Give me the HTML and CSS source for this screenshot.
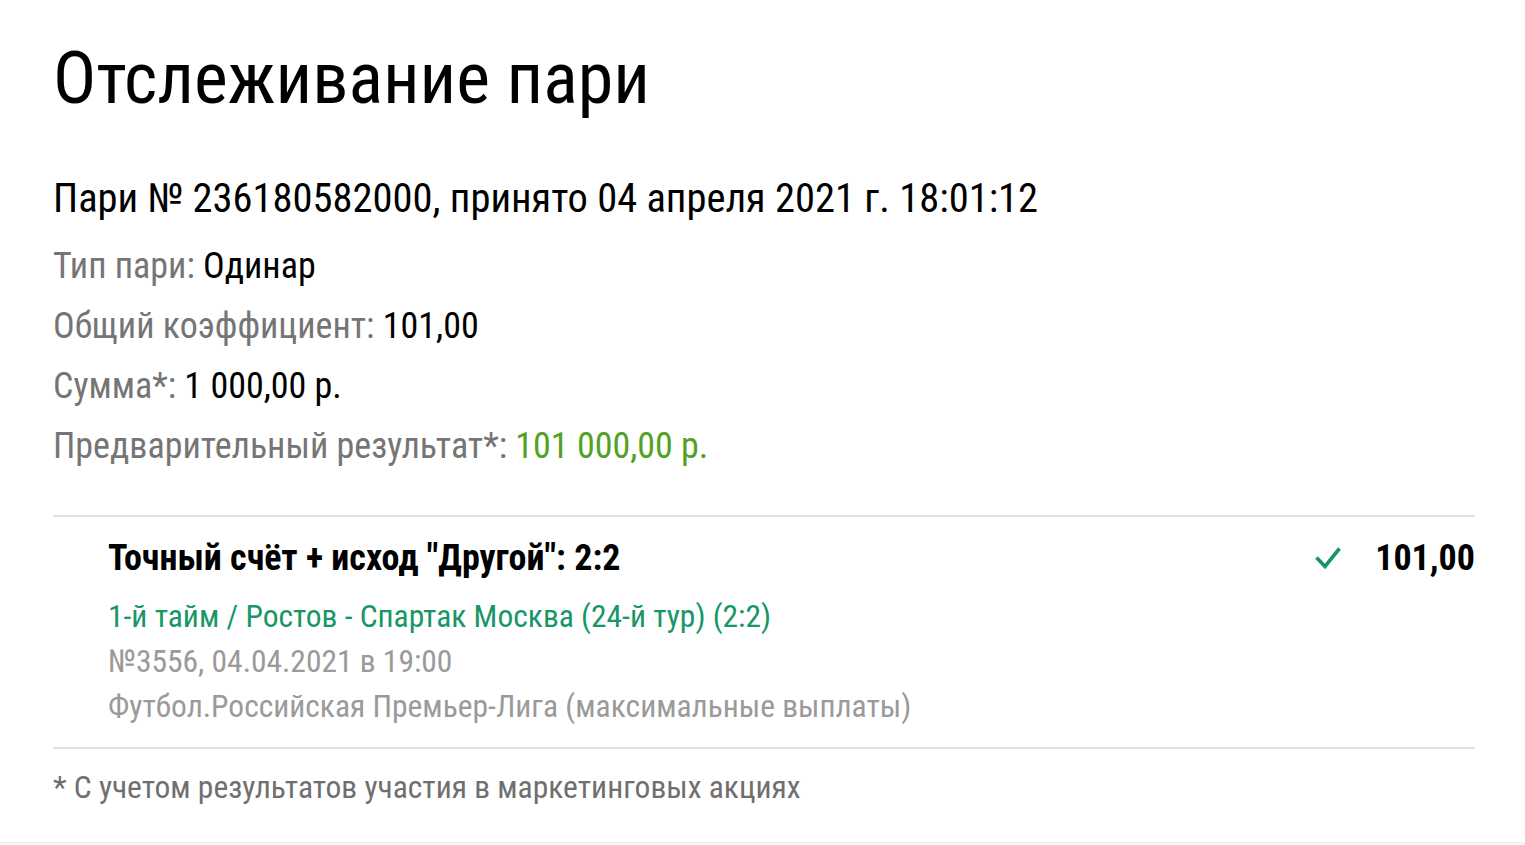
FILE: index.html
```html
<!DOCTYPE html>
<html lang="ru">
<head>
<meta charset="utf-8">
<title>Отслеживание пари</title>
<link rel="stylesheet" href="styles.css">
</head>
<body>
<div class="page">
  <h1 class="title">Отслеживание пари</h1>
  <div class="bet-head">Пари № 236180582000, принято 04 апреля 2021 г. 18:01:12</div>
  <div class="info">
    <div class="row"><span class="label">Тип пари:</span> <span class="value">Одинар</span></div>
    <div class="row"><span class="label">Общий коэффициент:</span> <span class="value">101,00</span></div>
    <div class="row"><span class="label">Сумма*:</span> <span class="value">1 000,00 р.</span></div>
    <div class="row"><span class="label">Предварительный результат*:</span> <span class="value win">101 000,00 р.</span></div>
  </div>
  <div class="event">
    <div class="event-top">
      <div class="event-name">Точный счёт + исход "Другой": 2:2</div>
      <div class="event-right">
        <svg class="check" viewBox="0 0 26 26" width="26" height="26"><path d="M1.5 12.5l8.5 9L24.5 3.5" fill="none" stroke="currentColor" stroke-width="3.6"/></svg>
        <span class="coef">101,00</span>
      </div>
    </div>
    <div class="event-match">1-й тайм / Ростов - Спартак Москва (24-й тур) (2:2)</div>
    <div class="event-meta">№3556, 04.04.2021 в 19:00</div>
    <div class="event-meta">Футбол.Российская Премьер-Лига (максимальные выплаты)</div>
  </div>
  <div class="note">* С учетом результатов участия в маркетинговых акциях</div>
</div>
<div class="bottom-line"></div>
</body>
</html>
```
FILE: styles.css
```css
html, body {
  margin: 0;
  padding: 0;
  background: #ffffff;
}
body {
  font-family: "Roboto Condensed", Roboto, "Liberation Sans", sans-serif;
  color: #000;
  height: 845px;
  overflow: hidden;
  display: flex;
  flex-direction: column;
}
.page {
  padding: 37px 50px 0 53px;
  height: 805px;
}
.title {
  margin: 0;
  font-size: 72px;
  line-height: 84px;
  font-weight: 400;
}
.bet-head {
  margin-top: 53px;
  font-size: 40.5px;
  line-height: 48px;
}
.info {
  margin-top: 14px;
}
.row {
  font-size: 36px;
  line-height: 60px;
}
.label {
  color: #757575;
}
.value {
  color: #000;
}
.value.win {
  color: #52a024;
}
.event {
  margin-top: 39px;
  border-top: 2px solid #e1e1e1;
  border-bottom: 2px solid #e1e1e1;
  padding: 21px 0 18px 55px;
}
.event-top {
  display: flex;
  justify-content: space-between;
  align-items: center;
  height: 40px;
}
.event-name {
  font-size: 36px;
  font-weight: 700;
  line-height: 40px;
}
.event-right {
  display: flex;
  align-items: center;
  gap: 34px;
}
.check {
  color: #1a9466;
  display: block;
}
.coef {
  font-size: 36px;
  font-weight: 700;
  line-height: 40px;
}
.event-match {
  margin-top: 16px;
  font-size: 31.5px;
  line-height: 45px;
  color: #179766;
}
.event-meta {
  font-size: 31.5px;
  line-height: 45px;
  color: #9a9a9a;
}
.note {
  margin-top: 19px;
  font-size: 31.5px;
  line-height: 40px;
  color: #6f6f6f;
}
.bottom-line {
  height: 2px;
  background: #f1f1f1;
}
```
